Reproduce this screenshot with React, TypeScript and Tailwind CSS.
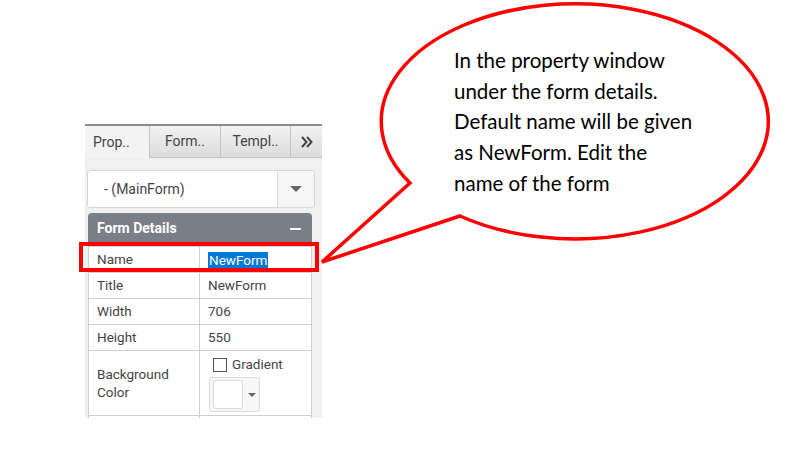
const rows = [
  { label: 'Name', value: 'NewForm', selected: true },
  { label: 'Title', value: 'NewForm' },
  { label: 'Width', value: '706' },
  { label: 'Height', value: '550' },
]

function Tabs() {
  return (
    <div className="flex h-[32px] text-[14px] text-[#444]">
      <div className="w-[64px] bg-[#f3f3f3] pl-[8px] flex items-center">Prop..</div>
      <div className="w-[71px] bg-gradient-to-b from-[#f2f2f2] to-[#dcdcdc] border-l border-b border-[#c4c4c4] flex items-center justify-center">
        Form..
      </div>
      <div className="w-[70px] bg-gradient-to-b from-[#f2f2f2] to-[#dcdcdc] border-l border-b border-[#c4c4c4] flex items-center justify-center">
        Templ..
      </div>
      <div className="flex-1 bg-gradient-to-b from-[#f2f2f2] to-[#dcdcdc] border-l border-b border-[#c4c4c4] flex items-center justify-center">
        <svg width="12" height="12" viewBox="0 0 12 12" fill="none" stroke="#444" strokeWidth="2">
          <path d="M1 1 L5.5 6 L1 11 M6 1 L10.5 6 L6 11" />
        </svg>
      </div>
    </div>
  )
}

function Dropdown() {
  return (
    <div className="ml-[2px] mt-[12px] h-[38px] w-[228px] flex rounded-[3px] border border-[#d6d6d6] bg-white text-[14px] text-[#444]">
      <div className="flex-1 flex items-center pl-[16px]">- (MainForm)</div>
      <div className="w-[37px] border-l border-[#dcdcdc] bg-[#f6f6f6] flex items-center justify-center rounded-r-[3px]">
        <div className="w-0 h-0 border-l-[6px] border-r-[6px] border-t-[6px] border-l-transparent border-r-transparent border-t-[#666]" />
      </div>
    </div>
  )
}

function FormDetails() {
  return (
    <div className="ml-[3px] mt-[5px] w-[224px] text-[13.5px] text-[#444]">
      <div className="h-[31px] rounded-t-[4px] bg-[#7a7e87] flex items-center justify-between pl-[9px] pr-[11px] text-white font-bold text-[14px]">
        <span>Form Details</span>
        <span className="block w-[11px] h-[2px] bg-white" />
      </div>
      <div className="mt-[2px] bg-white border-l border-t border-[#d0d0d0]">
        {rows.map((r) => (
          <div key={r.label} className="h-[26px] flex border-b border-[#d0d0d0]">
            <div className="w-[111px] border-r border-[#d0d0d0] pl-[8px] flex items-center">{r.label}</div>
            <div className="flex-1 pl-[8px] flex items-center border-r border-[#d0d0d0]">
              {r.selected ? <span className="bg-[#0078d7] text-white px-[1px] leading-[16px]">{r.value}</span> : r.value}
            </div>
          </div>
        ))}
        <div className="h-[65px] flex border-b border-[#d0d0d0]">
          <div className="w-[111px] border-r border-[#d0d0d0] pl-[8px] flex items-center leading-[18px]">
            Background
            <br />
            Color
          </div>
          <div className="flex-1 pl-[13px] pt-[6px] border-r border-[#d0d0d0]">
            <div className="flex items-center gap-[5px] leading-[15px]">
              <span className="block w-[14px] h-[14px] border border-[#555] bg-white" />
              <span>Gradient</span>
            </div>
            <div className="mt-[5px] -ml-[4px] w-[51px] h-[35px] rounded-[3px] border border-[#dcdcdc] bg-[#f7f7f7] flex items-center pl-[3px]">
              <div className="w-[30px] h-[29px] rounded-[3px] border border-[#d8d8d8] bg-white" />
              <div className="ml-[5px] w-0 h-0 border-l-[4px] border-r-[4px] border-t-[4px] border-l-transparent border-r-transparent border-t-[#666]" />
            </div>
          </div>
        </div>
        <div className="h-[10px] flex">
          <div className="w-[111px] border-r border-[#d0d0d0]" />
          <div className="flex-1 border-r border-[#d0d0d0]" />
        </div>
      </div>
    </div>
  )
}

export default function App() {
  return (
    <div className="relative w-[812px] h-[467px] bg-white overflow-hidden font-['Roboto',sans-serif]">
      <div className="pt-[124px] pl-[85px]">
        <div className="w-[237px] h-[294px] bg-[#f0f0f0] border-t-2 border-[#8c8c8c] overflow-hidden">
          <Tabs />
          <Dropdown />
          <FormDetails />
        </div>
      </div>

      {/* highlight */}
      <div className="absolute left-[79px] top-[242px] w-[240px] h-[30px] border-[4px] border-[#ff0000]" />

      {/* callout bubble */}
      <svg className="absolute left-0 top-0" width="812" height="467" viewBox="0 0 812 467">
        <path
          d="M410 183 L322 262 L460 216 A193.5 117.5 0 1 0 410 183 Z"
          fill="white"
          stroke="#ff0000"
          strokeWidth="3.5"
          strokeLinejoin="miter"
        />
      </svg>
      <div className="absolute left-[454px] top-[45px] font-['Lato',sans-serif] text-[20.5px] leading-[30.7px] text-black whitespace-nowrap">
        <div>In the property window</div>
        <div>under the form details.</div>
        <div>Default name will be given</div>
        <div>as NewForm. Edit the</div>
        <div>name of the form</div>
      </div>
    </div>
  )
}
